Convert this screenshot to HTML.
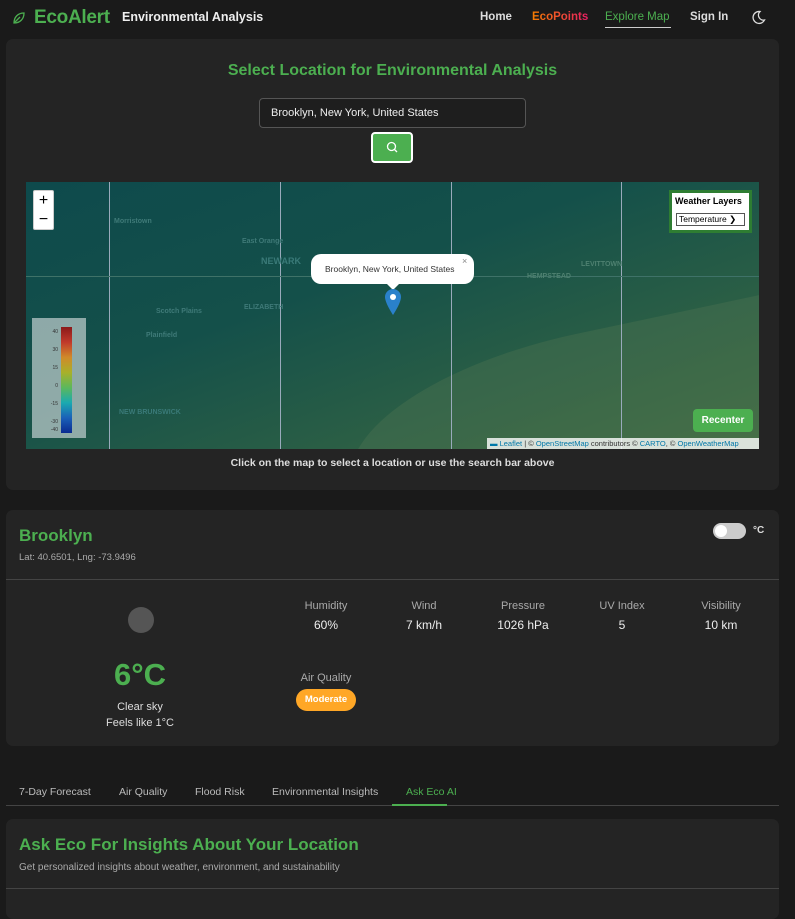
<!DOCTYPE html>
<html><head><meta charset="utf-8"><style>
*{box-sizing:border-box;margin:0;padding:0}
body{width:795px;height:899px;overflow:hidden;background:#1a1a1a;font-family:"Liberation Sans",Arial,sans-serif;color:#ddd;position:relative}
.a{position:absolute;white-space:nowrap}
.card{position:absolute;background:#242424;border-radius:7px}
.g{color:#4caf50}
.lbl{font-size:11px;color:#aaa;text-align:center;width:80px}
.val{font-size:12px;color:#eee;text-align:center;width:80px}
.lg{position:absolute;left:14px;font-size:5px;color:#333;width:18px;text-align:right}
</style></head><body>
<!-- header -->
<svg class="a" style="left:12px;top:11px" width="14" height="14" viewBox="0 0 14 14" fill="none" stroke="#4caf50" stroke-width="1.3"><path d="M2 12C2 6 6 2 12 2C12 8 8 12 2 12Z"/><path d="M2 12L8 6"/></svg>
<div class="a g" style="left:34px;top:7px;font-size:19px;font-weight:bold;letter-spacing:-0.3px">EcoAlert</div>
<div class="a" style="left:122px;top:10px;font-size:12.5px;font-weight:bold;color:#eee">Environmental Analysis</div>
<div class="a" style="left:480px;top:11px;font-size:11.5px;font-weight:bold;color:#ddd">Home</div>
<div class="a" style="left:532px;top:11px;font-size:11.5px;font-weight:bold;background:linear-gradient(90deg,#f57c00,#e91e63);-webkit-background-clip:text;color:transparent">EcoPoints</div>
<div class="a g" style="left:605px;top:11px;font-size:11.5px">Explore Map</div>
<div class="a" style="left:605px;top:27px;width:66px;height:1px;background:#ccc"></div>
<div class="a" style="left:690px;top:11px;font-size:11.5px;font-weight:bold;color:#ddd">Sign In</div>
<svg class="a" style="left:751px;top:10px" width="15" height="15" viewBox="0 0 15 15" fill="none" stroke="#ddd" stroke-width="1.3"><path d="M9 1.5A6 6 0 1 0 13.5 10 5 5 0 0 1 9 1.5Z"/></svg>
<!-- card 1 -->
<div class="card" style="left:6px;top:39px;width:773px;height:451px"></div>
<div class="a g" style="left:0;width:785px;top:62px;text-align:center;font-size:16px;font-weight:bold">Select Location for Environmental Analysis</div>
<div class="a" style="left:259px;top:98px;width:267px;height:30px;border:1px solid #555;border-radius:4px;background:#1e1e1e;font-size:11px;color:#eee;padding:8px 11px">Brooklyn, New York, United States</div>
<div class="a" style="left:371px;top:132px;width:42px;height:31px;border:2px solid #fff;border-radius:4px;background:#4caf50"></div>
<svg class="a" style="left:386px;top:141px" width="12" height="12" viewBox="0 0 12 12" fill="none" stroke="#fff" stroke-width="1.3"><circle cx="5.5" cy="5.5" r="4"/><path d="M8.5 8.5L11 11"/></svg>
<!-- map -->
<div class="a" style="left:26px;top:182px;width:733px;height:267px;background:linear-gradient(160deg,#0e4a4c 0%,#14504a 40%,#2a5e45 70%,#456e40 100%);overflow:hidden">
 <div class="a" style="left:320px;top:150px;width:500px;height:200px;border-radius:50% 0 0 0;background:#4a7050;opacity:.45;transform:rotate(-12deg)"></div>
 <div class="a" style="left:83px;top:0;width:1px;height:267px;background:#9ab"></div>
 <div class="a" style="left:254px;top:0;width:1px;height:267px;background:#9ab"></div>
 <div class="a" style="left:425px;top:0;width:1px;height:267px;background:#9ab"></div>
 <div class="a" style="left:595px;top:0;width:1px;height:267px;background:#9ab"></div>
 <div class="a" style="left:0;top:94px;width:733px;height:1px;background:#3f7268"></div>
 <div class="a" style="left:6px;top:136px;width:54px;height:120px;background:#b8c8c8;opacity:.75"></div>
 <div class="a" style="left:35px;top:145px;width:11px;height:106px;background:linear-gradient(#8b1a1a,#c0392b,#d08a2a,#a8b02a,#5cb85c,#1aaab0,#1a60b8,#0a2a90)"></div>
 <div class="lg" style="top:147px">40</div><div class="lg" style="top:165px">30</div><div class="lg" style="top:183px">15</div><div class="lg" style="top:201px">0</div><div class="lg" style="top:219px">-15</div><div class="lg" style="top:237px">-30</div><div class="lg" style="top:245px">-40</div>
 <div class="a" style="left:88px;top:36px;font-size:7px;color:#3f7a78;font-weight:bold">Morristown</div>
 <div class="a" style="left:216px;top:56px;font-size:7px;color:#3f7a78;font-weight:bold">East Orange</div>
 <div class="a" style="left:235px;top:74px;font-size:9px;font-weight:bold;color:#3a7a78">NEWARK</div>
 <div class="a" style="left:218px;top:122px;font-size:7px;color:#3f7a78;font-weight:bold">ELIZABETH</div>
 <div class="a" style="left:130px;top:126px;font-size:7px;color:#3f7a78;font-weight:bold">Scotch Plains</div>
 <div class="a" style="left:120px;top:150px;font-size:7px;color:#3f7a78;font-weight:bold">Plainfield</div>
 <div class="a" style="left:501px;top:91px;font-size:7px;color:#4e8070;font-weight:bold">HEMPSTEAD</div>
 <div class="a" style="left:555px;top:79px;font-size:7px;color:#4e8070;font-weight:bold">LEVITTOWN</div>
 <div class="a" style="left:93px;top:227px;font-size:7px;color:#3a7a78;font-weight:bold">NEW BRUNSWICK</div>
 <div class="a" style="left:667px;top:227px;width:60px;height:23px;background:#4caf50;border-radius:4px;color:#fff;font-size:10px;font-weight:bold;text-align:center;line-height:23px">Recenter</div>
 <div class="a" style="left:461px;top:256px;width:272px;height:11px;background:rgba(255,255,255,.8);font-size:7.5px;color:#333;padding-left:3px;line-height:11px"><span style="color:#0078a8">▬ Leaflet</span> | © <span style="color:#0078a8">OpenStreetMap</span> contributors © <span style="color:#0078a8">CARTO</span>, © <span style="color:#0078a8">OpenWeatherMap</span></div>
</div>
<div class="a" style="left:33px;top:190px;width:21px;height:40px;background:#fff;border-radius:2px;border:1px solid #ccc;color:#000;font-size:16px;text-align:center;line-height:19px">+<br>−</div>
<div class="a" style="left:669px;top:190px;width:83px;height:43px;background:#fff;border:3px solid #2e7d32"></div>
<div class="a" style="left:675px;top:196px;font-size:9px;font-weight:bold;color:#000">Weather Layers</div>
<div class="a" style="left:676px;top:213px;width:69px;height:13px;border:1px solid #555;font-size:8.5px;color:#000;padding-left:2px;line-height:11px">Temperature ❯</div>
<div class="a" style="left:311px;top:254px;width:163px;height:30px;background:#fff;border-radius:10px;font-size:8.5px;color:#333;padding:10px 0 0 14px">Brooklyn, New York, United States</div>
<div class="a" style="left:462px;top:256px;font-size:9px;color:#888">×</div>
<div class="a" style="left:387px;top:284px;width:0;height:0;border:6px solid transparent;border-top-color:#fff"></div>
<svg class="a" style="left:385px;top:289px" width="16" height="26" viewBox="0 0 16 26"><path d="M8 26C8 26 0 14 0 8A8 8 0 0 1 16 8C16 14 8 26 8 26Z" fill="#2a81cb"/><circle cx="8" cy="8" r="3" fill="#fff"/></svg>
<div class="a" style="left:0;width:785px;top:457px;text-align:center;font-size:10.5px;color:#ddd;font-weight:bold">Click on the map to select a location or use the search bar above</div>
<!-- card 2 -->
<div class="card" style="left:6px;top:510px;width:773px;height:236px"></div>
<div class="a g" style="left:19px;top:526px;font-size:17px;font-weight:bold">Brooklyn</div>
<div class="a" style="left:19px;top:552px;font-size:9.5px;color:#aaa">Lat: 40.6501, Lng: -73.9496</div>
<div class="a" style="left:713px;top:523px;width:33px;height:16px;border-radius:8px;background:#ccc"></div>
<div class="a" style="left:715px;top:525px;width:12px;height:12px;border-radius:50%;background:#fff"></div>
<div class="a" style="left:753px;top:525px;font-size:10px;font-weight:bold;color:#ddd">°C</div>
<div class="a" style="left:6px;top:579px;width:773px;height:1px;background:#444"></div>
<div class="a" style="left:128px;top:607px;width:26px;height:26px;border-radius:50%;background:#555"></div>
<div class="a g" style="left:40px;width:200px;top:657px;text-align:center;font-size:31px;font-weight:bold">6°C</div>
<div class="a" style="left:40px;width:200px;top:701px;text-align:center;font-size:11px;color:#ddd">Clear sky</div>
<div class="a" style="left:40px;width:200px;top:717px;text-align:center;font-size:11px;color:#ddd">Feels like 1°C</div>
<div class="a lbl" style="left:286px;top:600px">Humidity</div><div class="a val" style="left:286px;top:618px">60%</div>
<div class="a lbl" style="left:384px;top:600px">Wind</div><div class="a val" style="left:384px;top:618px">7 km/h</div>
<div class="a lbl" style="left:483px;top:600px">Pressure</div><div class="a val" style="left:483px;top:618px">1026 hPa</div>
<div class="a lbl" style="left:582px;top:600px">UV Index</div><div class="a val" style="left:582px;top:618px">5</div>
<div class="a lbl" style="left:681px;top:600px">Visibility</div><div class="a val" style="left:681px;top:618px">10 km</div>
<div class="a lbl" style="left:286px;top:672px">Air Quality</div>
<div class="a" style="left:296px;top:689px;width:60px;height:22px;border-radius:11px;background:#ffa726;color:#fff;font-size:9.5px;font-weight:bold;text-align:center;line-height:22px">Moderate</div>
<!-- tabs -->
<div class="a" style="left:19px;top:786px;font-size:10.5px;color:#bbb">7-Day Forecast</div>
<div class="a" style="left:119px;top:786px;font-size:10.5px;color:#bbb">Air Quality</div>
<div class="a" style="left:195px;top:786px;font-size:10.5px;color:#bbb">Flood Risk</div>
<div class="a" style="left:272px;top:786px;font-size:10.5px;color:#bbb">Environmental Insights</div>
<div class="a g" style="left:406px;top:786px;font-size:10.5px">Ask Eco AI</div>
<div class="a" style="left:6px;top:805px;width:773px;height:1px;background:#444"></div>
<div class="a" style="left:392px;top:804px;width:55px;height:2px;background:#4caf50"></div>
<!-- card 3 -->
<div class="card" style="left:6px;top:819px;width:773px;height:100px"></div>
<div class="a g" style="left:19px;top:835px;font-size:17px;font-weight:bold">Ask Eco For Insights About Your Location</div>
<div class="a" style="left:19px;top:862px;font-size:10px;color:#aaa">Get personalized insights about weather, environment, and sustainability</div>
<div class="a" style="left:6px;top:888px;width:773px;height:1px;background:#444"></div>
</body></html>
